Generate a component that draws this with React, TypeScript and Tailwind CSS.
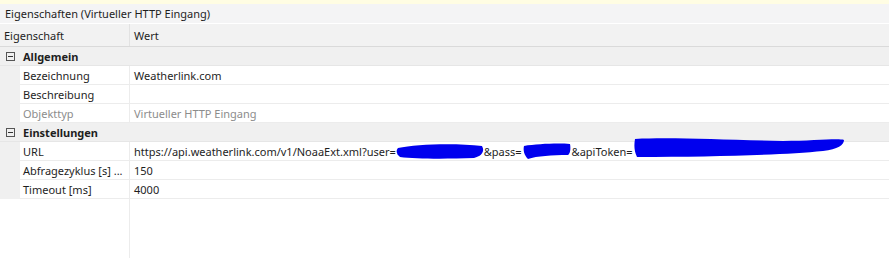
import type { ReactNode } from 'react';

const font = { fontFamily: '"Noto Sans", "Open Sans", sans-serif' };

function Scribble({ w, h, d }: { w: number; h: number; d: string }) {
  return (
    <svg width={w} height={h} viewBox={`0 0 ${w} ${h}`} className="inline-block align-middle">
      <path d={d} fill="#0000ee" />
    </svg>
  );
}

function CategoryRow({ label }: { label: string }) {
  return (
    <div className="flex h-[19px] bg-[#f0f0f0] border-b border-[#e6e6e6]">
      <div className="w-[20px] flex items-center justify-center">
        <span className="w-[9px] h-[9px] border border-[#555] flex items-center justify-center">
          <span className="w-[5px] h-px bg-[#333]" />
        </span>
      </div>
      <div className="pl-[3px] flex items-center font-bold text-[#1e1e1e]">{label}</div>
    </div>
  );
}

function PropRow({ label, value, muted }: { label: string; value?: ReactNode; muted?: boolean }) {
  return (
    <div className="flex h-[19px]">
      <div className="w-[20px] bg-[#f0f0f0]" />
      <div
        className={`w-[110px] pl-[3px] flex items-center border-b border-r border-[#ececec] whitespace-nowrap ${muted ? 'text-[#8c8c8c]' : 'text-[#1e1e1e]'}`}
      >
        {label}
      </div>
      <div
        className={`flex-1 pl-[4px] flex items-center border-b border-[#ececec] whitespace-nowrap ${muted ? 'text-[#8c8c8c]' : 'text-[#1e1e1e]'}`}
      >
        {value}
      </div>
    </div>
  );
}

export default function App() {
  return (
    <div className="w-[889px] h-[258px] bg-white text-[11px] leading-none overflow-hidden flex flex-col" style={font}>
      <div className="h-[4px] bg-[#fffde3]" />
      <div className="h-[20px] bg-[#f4f4f5] pl-[5px] flex items-center text-[#1e1e1e] border-b border-white">
        Eigenschaften (Virtueller HTTP Eingang)
      </div>
      <div className="h-[23px] bg-[#f2f2f2] flex border-b border-[#dadada] text-[#1e1e1e]">
        <div className="w-[130px] pl-[4px] flex items-center border-r border-[#e2e2e2]">Eigenschaft</div>
        <div className="pl-[4px] flex items-center">Wert</div>
      </div>
      <CategoryRow label="Allgemein" />
      <PropRow label="Bezeichnung" value="Weatherlink.com" />
      <PropRow label="Beschreibung" />
      <PropRow label="Objekttyp" value="Virtueller HTTP Eingang" muted />
      <CategoryRow label="Einstellungen" />
      <PropRow
        label="URL"
        value={
          <span className="flex items-center">
            <span>https://api.weatherlink.com/v1/NoaaExt.xml?user=</span>
            <Scribble w={88} h={16} d="M2 5 C20 1 60 0 86 3 C89 8 86 13 78 15 C50 16 20 16 4 14 C0 11 0 7 2 5 Z" />
            <span>&amp;pass=</span>
            <Scribble w={50} h={18} d="M2 4 C15 2 35 1 48 2 C49 7 48 12 46 13 C30 13 15 14 6 17 C2 13 1 8 2 4 Z" />
            <span>&amp;apiToken=</span>
            <span className="relative inline-block w-[212px] h-[16px]">
              <svg width={212} height={24} viewBox="0 0 212 24" className="absolute left-0 -top-[6px]">
                <path
                  d="M2 2 C40 0 90 3 150 4 C180 4 205 1 211 3 C211 8 205 12 190 14 C150 18 80 20 4 20 C1 14 1 8 2 2 Z"
                  fill="#0000ee"
                />
              </svg>
            </span>
          </span>
        }
      />
      <PropRow label="Abfragezyklus [s] ..." value="150" />
      <PropRow label="Timeout [ms]" value="4000" />
      <div className="flex-1 flex">
        <div className="w-[130px] border-r border-[#ececec]" />
      </div>
    </div>
  );
}
